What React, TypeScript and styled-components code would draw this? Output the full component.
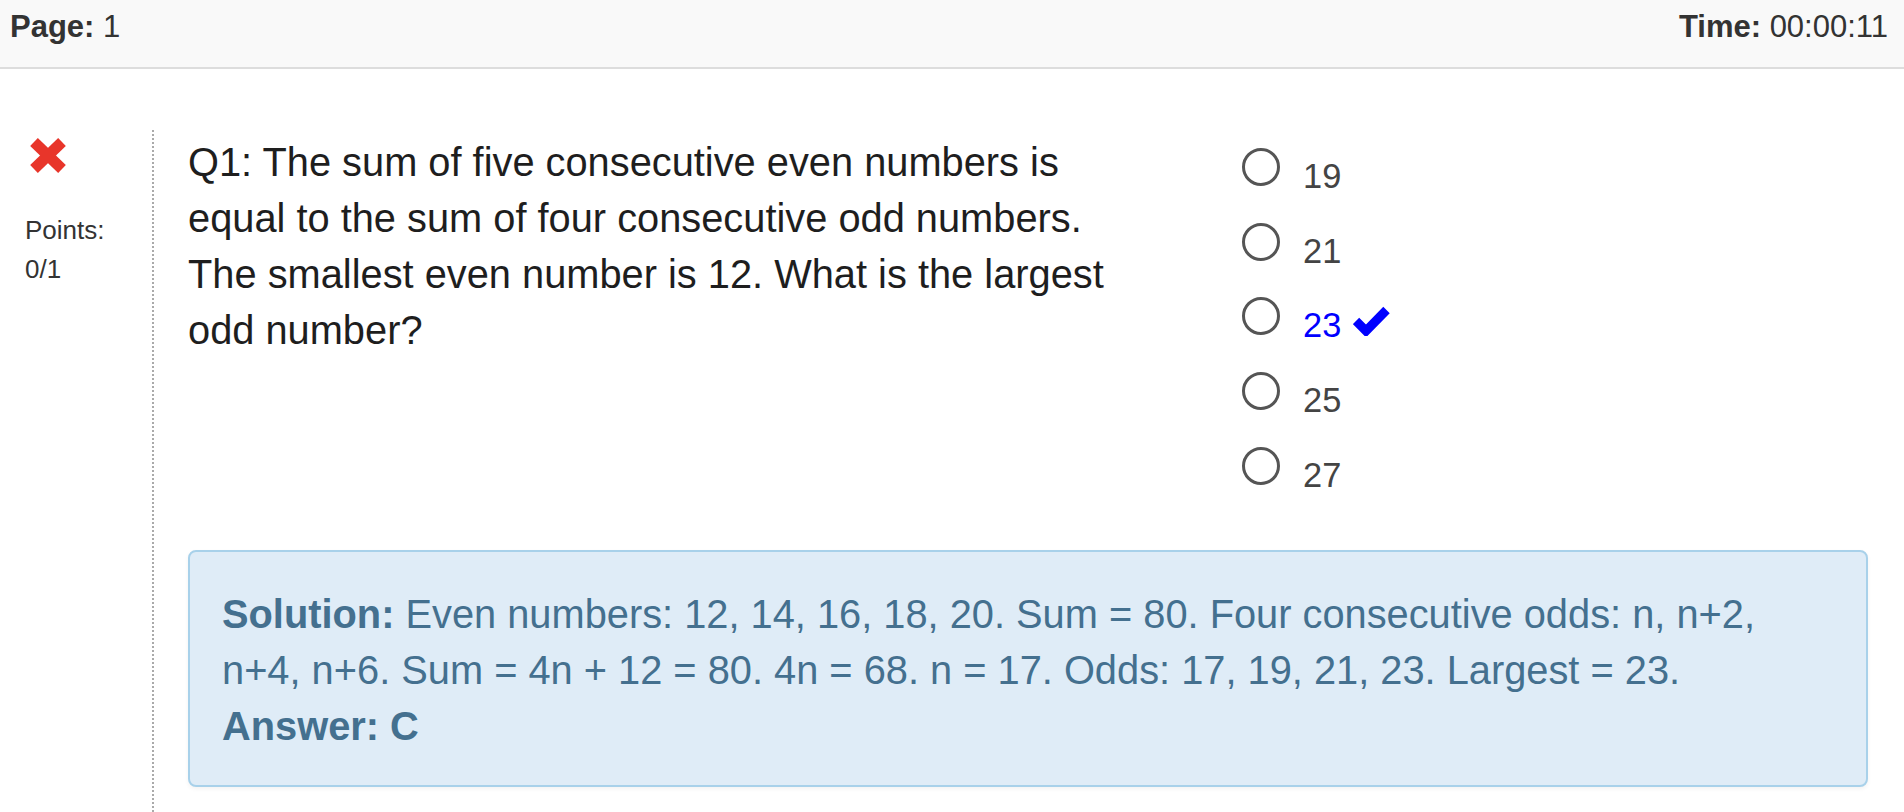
import React from "react";
import styled, { createGlobalStyle } from "styled-components";

const GlobalStyle = createGlobalStyle`
  html, body {
    margin: 0;
    padding: 0;
    background: #ffffff;
    font-family: "Liberation Sans", Arial, Helvetica, sans-serif;
    overflow: hidden;
  }
  * { box-sizing: border-box; }
`;

const Page = styled.div`
  width: 100%;
  min-height: 812px;
  display: flex;
  flex-direction: column;
`;

const Header = styled.header`
  height: 69px;
  display: flex;
  justify-content: space-between;
  align-items: flex-start;
  padding: 5px 16px 0 10px;
  background: #f9f9f9;
  border-bottom: 2px solid #dddddd;
  color: #333333;
  font-size: 31px;
  line-height: 44px;
`;

const HeaderItem = styled.div`
  b { font-weight: 700; }
`;

const QuestionRow = styled.section`
  display: flex;
  margin-top: 61px;
`;

const StatusCol = styled.div`
  width: 152px;
  flex-shrink: 0;
  padding: 8px 0 0 25px;
  display: flex;
  flex-direction: column;
  align-items: flex-start;
`;

const WrongIcon = styled.svg`
  width: 36px;
  height: 35px;
  margin-left: 5px;
  display: block;
`;

const Points = styled.div`
  margin-top: 38px;
  font-size: 26px;
  line-height: 39px;
  color: #333333;
`;

const Body = styled.div`
  flex: 1;
  min-height: 682px;
  border-left: 2px dotted #aaaaaa;
  padding: 0 36px 24px 34px;
`;

const QA = styled.div`
  display: grid;
  grid-template-columns: 935px 1fr;
  column-gap: 119px;
`;

const QuestionText = styled.p`
  margin: 4px 0 0;
  font-size: 39.8px;
  line-height: 56px;
  color: #1e1e1e;
`;

const Options = styled.div`
  display: flex;
  flex-direction: column;
`;

const OptionRow = styled.div`
  display: flex;
  align-items: flex-start;
  height: 74.7px;
`;

const Radio = styled.span`
  width: 38px;
  height: 38px;
  margin-top: 18px;
  border: 3px solid #555555;
  border-radius: 50%;
  flex-shrink: 0;
  background: #ffffff;
`;

const OptionLabel = styled.span<{ $correct?: boolean }>`
  display: flex;
  align-items: flex-start;
  margin: 18px 0 0 23px;
  font-size: 34.4px;
  line-height: 56px;
  color: ${(p) => (p.$correct ? "#0000ff" : "#444444")};
`;

const CheckIcon = styled.svg`
  width: 37px;
  height: 30px;
  margin: 9px 0 0 12px;
  display: block;
`;

const Solution = styled.div`
  margin-top: 46.5px;
  background: #dfecf7;
  border: 2px solid #a8d1ea;
  border-radius: 8px;
  box-shadow: 0 2px 4px rgba(0, 0, 0, 0.05);
  color: #44708f;
  padding: 34px 33px 31px 32px;
  font-size: 39.8px;
  line-height: 56px;
  b { font-weight: 700; }
`;

const options = [
  { label: "19" },
  { label: "21" },
  { label: "23", correct: true },
  { label: "25" },
  { label: "27" },
];

export default function App() {
  return (
    <Page>
      <GlobalStyle />
      <Header>
        <HeaderItem>
          <b>Page:</b> 1
        </HeaderItem>
        <HeaderItem>
          <b>Time:</b> 00:00:11
        </HeaderItem>
      </Header>
      <QuestionRow>
        <StatusCol>
          <WrongIcon viewBox="0 0 36 35" aria-label="incorrect">
            <g stroke="#e8352a" strokeWidth="11" strokeLinecap="butt">
              <line x1="4" y1="4" x2="32" y2="31" />
              <line x1="32" y1="4" x2="4" y2="31" />
            </g>
          </WrongIcon>
          <Points>
            Points:
            <br />
            0/1
          </Points>
        </StatusCol>
        <Body>
          <QA>
            <QuestionText>
              Q1: The sum of five consecutive even numbers is equal to the sum of four
              consecutive odd numbers. The smallest even number is 12. What is the largest
              odd number?
            </QuestionText>
            <Options>
              {options.map((o) => (
                <OptionRow key={o.label}>
                  <Radio />
                  <OptionLabel $correct={o.correct}>
                    {o.label}
                    {o.correct && (
                      <CheckIcon viewBox="0 0 37 30" aria-label="correct">
                        <polyline
                          points="3,15 13,25 33.5,4"
                          fill="none"
                          stroke="#0000ff"
                          strokeWidth="9"
                          strokeLinejoin="miter"
                        />
                      </CheckIcon>
                    )}
                  </OptionLabel>
                </OptionRow>
              ))}
            </Options>
          </QA>
          <Solution>
            <b>Solution:</b> Even numbers: 12, 14, 16, 18, 20. Sum = 80. Four consecutive
            odds: n, n+2, n+4, n+6. Sum = 4n + 12 = 80. 4n = 68. n = 17. Odds: 17, 19, 21,
            23. Largest = 23.
            <br />
            <b>Answer: C</b>
          </Solution>
        </Body>
      </QuestionRow>
    </Page>
  );
}
